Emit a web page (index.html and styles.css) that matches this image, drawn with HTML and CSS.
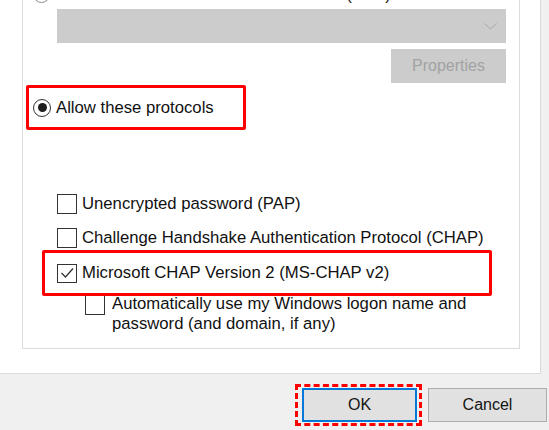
FILE: index.html
```
<!DOCTYPE html>
<html>
<head>
<meta charset="utf-8">
<link rel="stylesheet" href="styles.css">
</head>
<body>
<div class="panel">
  <div class="group">
    <div class="radio-row eap">
      <span class="radio"></span>
      <span class="label">Use Extensible Authentication Protocol (EAP)</span>
    </div>
    <div class="eap-controls">
      <div class="dropdown">
        <svg class="chev" width="13" height="7" viewBox="0 0 13 7"><path d="M0.5 0.5 L6.5 6 L12.5 0.5" fill="none" stroke="#a8a8a8" stroke-width="1"/></svg>
      </div>
      <div class="btn-disabled">Properties</div>
    </div>
    <div class="mark mark-allow">
      <span class="radio checked"><span class="dot"></span></span>
      <span class="label">Allow these protocols</span>
    </div>
    <div class="protocols">
      <div class="check-row">
        <span class="box"></span>
        <span class="label">Unencrypted password (PAP)</span>
      </div>
      <div class="check-row chap">
        <span class="box"></span>
        <span class="label">Challenge Handshake Authentication Protocol (CHAP)</span>
      </div>
    </div>
    <div class="mark mark-ms">
      <span class="box">
        <svg width="18" height="18" viewBox="0 0 18 18"><path d="M3.5 9 L7.5 13 L15 4.5" fill="none" stroke="#333" stroke-width="1.3"/></svg>
      </span>
      <span class="label">Microsoft CHAP Version 2 (MS-CHAP v2)</span>
    </div>
    <div class="check-row auto">
      <span class="box"></span>
      <span class="label">Automatically use my Windows logon name and<br>password (and domain, if any)</span>
    </div>
  </div>
</div>
<div class="footer">
  <div class="ok-mark">
    <button class="btn btn-ok">OK</button>
  </div>
  <button class="btn">Cancel</button>
</div>
</body>
</html>
```
FILE: styles.css
```
* { box-sizing: border-box; }
html, body { margin: 0; padding: 0; }
body {
  width: 549px;
  height: 430px;
  overflow: hidden;
  background: #f0f0f0;
  font-family: "Liberation Sans", Arial, sans-serif;
  font-size: 16.7px;
  color: #111;
}
.panel {
  width: 541px;
  height: 374px;
  background: #fff;
  border-right: 1px solid #dadada;
  border-bottom: 1px solid #dadada;
  overflow: hidden;
}
.group {
  margin-left: 22px;
  margin-top: -30px;
  width: 498px;
  height: 379px;
  border: 1px solid #dcdcdc;
  padding-top: 15px;
}
.label { white-space: nowrap; line-height: 20px; }
.radio-row { display: flex; align-items: center; gap: 5px; }
.eap { padding-left: 10px; height: 17px; }
.radio {
  width: 18px;
  height: 18px;
  border: 1px solid #333;
  border-radius: 50%;
  display: flex;
  align-items: center;
  justify-content: center;
  flex: none;
}
.eap .radio { border-color: #8a8a8a; width: 17px; height: 17px; }
.eap .label { color: #222; }
.dot { width: 9px; height: 9px; border-radius: 50%; background: #1e1e1e; }
.eap-controls {
  display: flex;
  flex-direction: column;
  align-items: flex-end;
  gap: 6px;
  padding: 0 13px 0 34px;
  margin-top: 6px;
}
.dropdown {
  width: 100%;
  height: 34px;
  background: #cccccc;
  display: flex;
  align-items: center;
  justify-content: flex-end;
  padding-right: 9px;
}
.chev { display: block; }
.btn-disabled {
  width: 115px;
  height: 34px;
  background: #cccccc;
  color: #a2a2a2;
  font-size: 16px;
  display: flex;
  align-items: center;
  justify-content: center;
}
.mark {
  border: 3px solid #ff0000;
  border-radius: 2px;
  display: flex;
  align-items: center;
  gap: 5px;
  position: relative;
  z-index: 1;
}
.mark-allow {
  margin: 2px 0 0 3px;
  width: 220px;
  height: 45px;
  padding-left: 4px;
}
.protocols { padding-left: 34px; margin-top: 64px; }
.check-row { display: flex; align-items: center; gap: 5px; }
.chap { margin-top: 14px; }
.box {
  width: 20px;
  height: 20px;
  border: 1px solid #333;
  background: #fff;
  flex: none;
  display: flex;
  align-items: center;
  justify-content: center;
}
.mark-ms {
  margin: 2px 0 0 19px;
  width: 450px;
  height: 46px;
  padding-left: 12px;
}
.mark-ms .box { height: 19px; }
.auto {
  align-items: flex-start;
  margin-top: -2px;
  padding-left: 62px;
  gap: 7px;
}
.auto .box { margin-top: 1px; }
.footer {
  display: flex;
  justify-content: flex-end;
  align-items: flex-start;
  gap: 6px;
  padding: 10px 2px 0 0;
}
.ok-mark {
  border: 3px dashed #ff0000;
  padding: 1px 2px 1px 4px;
}
.btn {
  font-family: "Liberation Sans", Arial, sans-serif;
  font-size: 16px;
  color: #141414;
  background: #e1e1e1;
  border: 1px solid #adadad;
  width: 119px;
  height: 34px;
  margin-top: 4px;
  padding: 0;
}
.btn-ok {
  width: 115px;
  margin-top: 0;
  border: 2px solid #0078d7;
}
```
